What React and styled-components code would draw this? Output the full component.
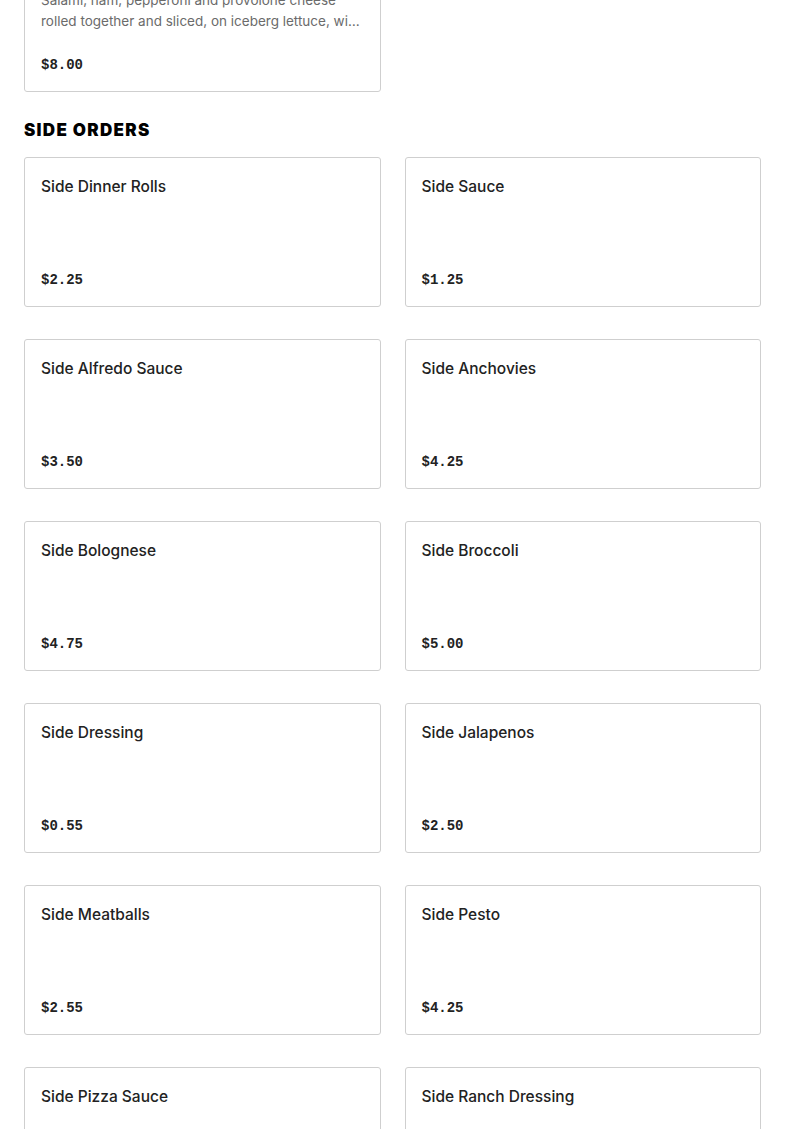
import React from "react";
import styled, { createGlobalStyle } from "styled-components";

const GlobalStyle = createGlobalStyle`
  body {
    margin: 0;
    background: #fff;
    font-family: Inter, "Liberation Sans", Arial, sans-serif;
    color: #222;
  }
`;

const Page = styled.div`
  padding: 0 24px;
  margin-top: -58px;
`;

const Section = styled.section`
  margin-bottom: 26px;
`;

const SectionTitle = styled.h2`
  margin: 0 0 15px;
  font-family: Inter, "Liberation Sans", Arial, sans-serif;
  font-size: 17px;
  font-weight: 900;
  letter-spacing: 1.3px;
  line-height: 24px;
  color: #000;
`;

const Grid = styled.div`
  display: grid;
  grid-template-columns: 1fr 1fr;
  column-gap: 24px;
  row-gap: 32px;
`;

const Card = styled.div`
  box-sizing: border-box;
  height: 150px;
  border: 1px solid #cfcfcf;
  border-radius: 3px;
  padding: 18px 16px 16px;
  display: flex;
  flex-direction: column;
  background: #fff;
`;

const Name = styled.div`
  font-size: 15.5px;
  font-weight: 500;
  line-height: 22px;
  color: #222;
`;

const Description = styled.div`
  margin-top: 7px;
  font-size: 13.5px;
  line-height: 21px;
  color: #6b6b6b;
  display: -webkit-box;
  -webkit-line-clamp: 2;
  -webkit-box-orient: vertical;
  overflow: hidden;
  overflow-wrap: anywhere;
`;

const Price = styled.div`
  margin-top: auto;
  font-family: "Liberation Mono", "Courier New", monospace;
  font-size: 14px;
  font-weight: 700;
  line-height: 20px;
  color: #222;
`;

const sides = [
  ["Side Dinner Rolls", "$2.25"],
  ["Side Sauce", "$1.25"],
  ["Side Alfredo Sauce", "$3.50"],
  ["Side Anchovies", "$4.25"],
  ["Side Bolognese", "$4.75"],
  ["Side Broccoli", "$5.00"],
  ["Side Dressing", "$0.55"],
  ["Side Jalapenos", "$2.50"],
  ["Side Meatballs", "$2.55"],
  ["Side Pesto", "$4.25"],
  ["Side Pizza Sauce", "$3.00"],
  ["Side Ranch Dressing", "$0.75"],
];

const MenuCard = ({ name, description, price }) => (
  <Card>
    <Name>{name}</Name>
    {description ? <Description>{description}</Description> : ""}
    <Price>{price}</Price>
  </Card>
);

const App = () => (
  <Page>
    <GlobalStyle />
    <Section>
      <Grid>
        <MenuCard
          name="Antipasto Salad"
          description="Salami, ham, pepperoni and provolone cheese rolled together and sliced, on iceberg lettuce, with tomatoes, olives and dressing."
          price="$8.00"
        />
      </Grid>
    </Section>
    <Section>
      <SectionTitle>SIDE ORDERS</SectionTitle>
      <Grid>
        {sides.map(([name, price]) => (
          <MenuCard key={name} name={name} price={price} />
        ))}
      </Grid>
    </Section>
  </Page>
);

export default App;
